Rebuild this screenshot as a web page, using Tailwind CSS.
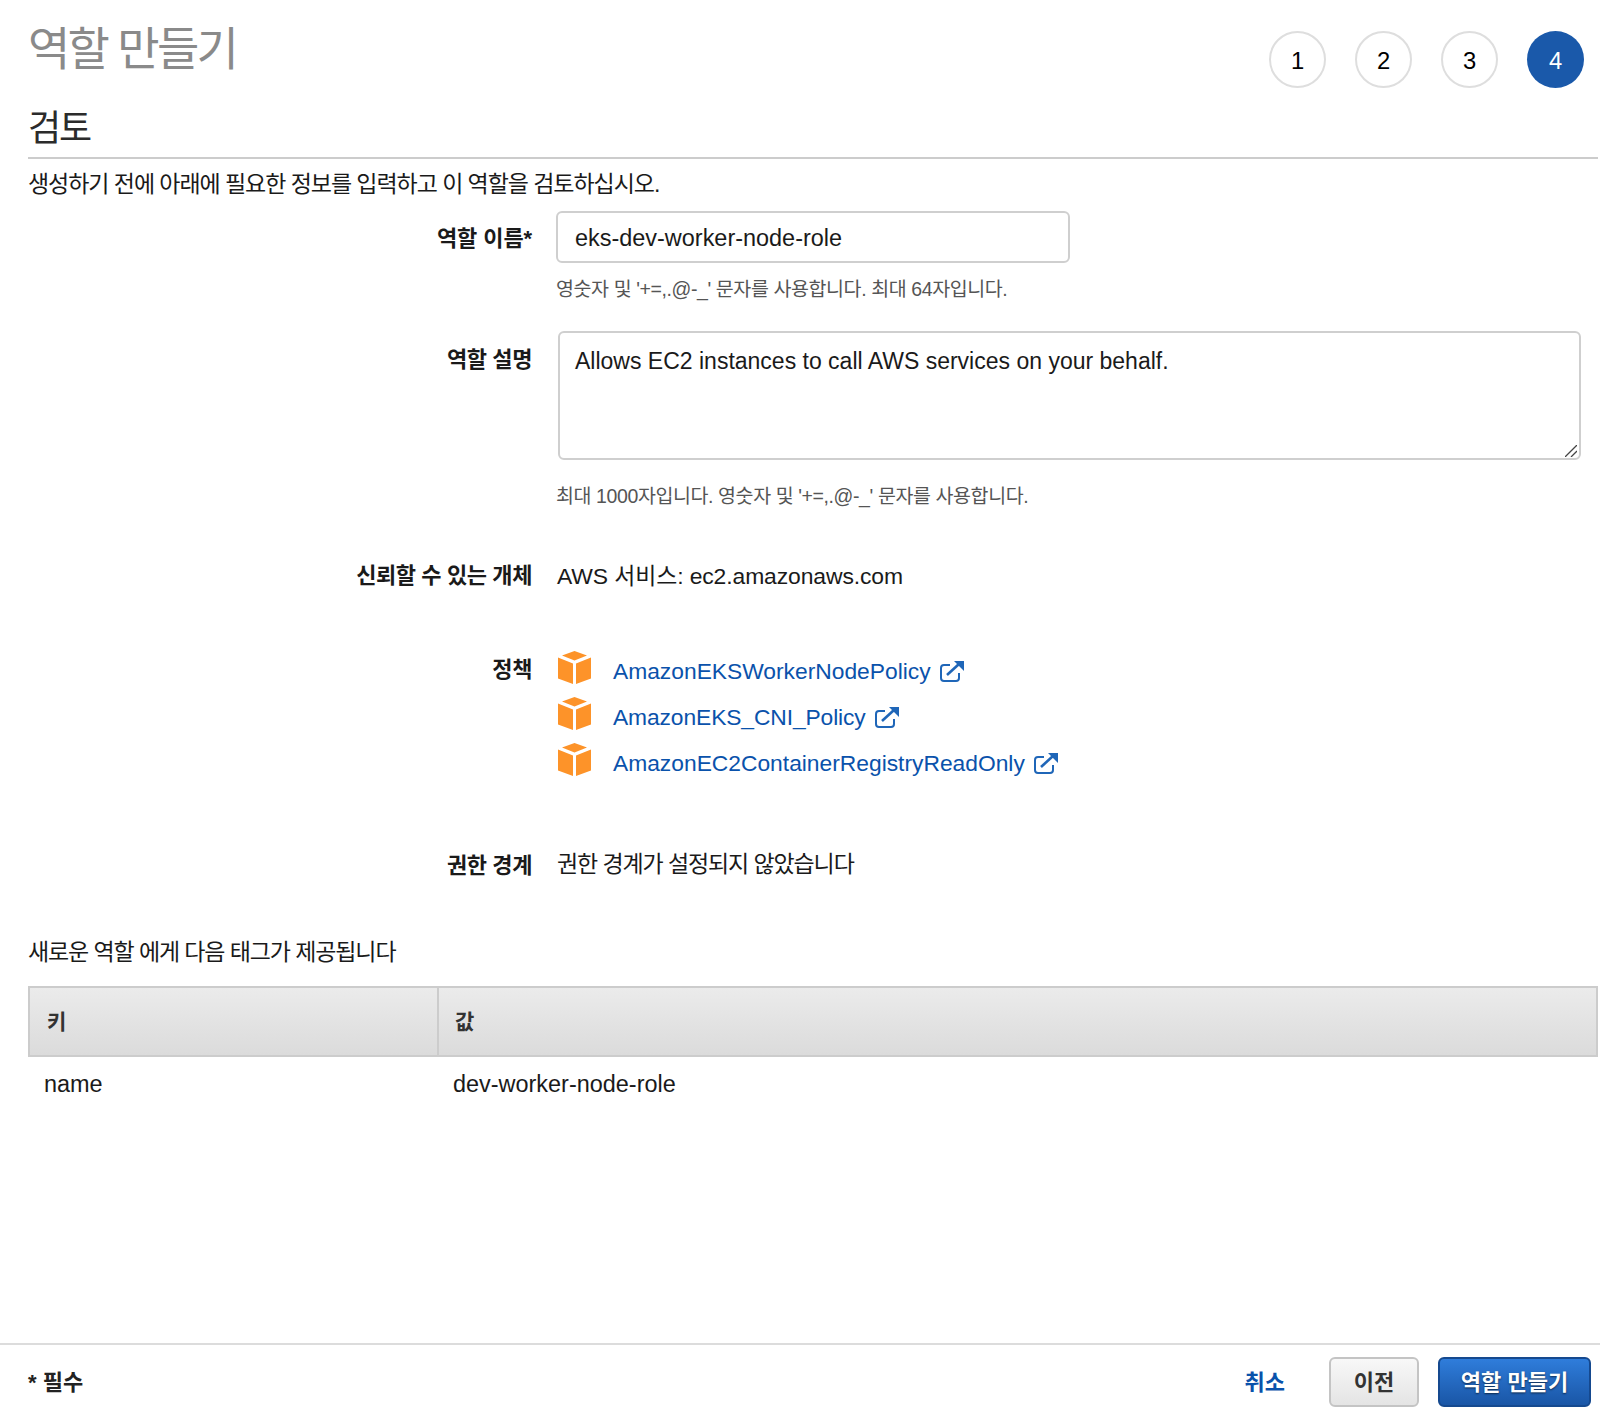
<!DOCTYPE html>
<html lang="ko">
<head>
  <meta charset="UTF-8">
  <title>역할 만들기</title>
  <script src="https://cdn.jsdelivr.net/npm/@tailwindcss/browser@4"></script>
</head>
<body class="bg-white text-[#1a1a1a] font-['Liberation_Sans','Noto_Sans_CJK_KR',sans-serif] text-[23px]">
  <div class="flex flex-col h-[1412px] w-[1600px] overflow-hidden">
    <main class="pl-[28px] pr-[2px]">
      <!-- Header -->
      <div class="flex justify-between items-start h-[97px]">
        <h1 class="text-[46px] leading-[54px] mt-[22px] text-[#8a8a8a] tracking-[-2.7px]">역할 만들기</h1>
        <ol class="flex gap-[29px] pt-[31px] pr-[14px] text-[23.8px]">
          <li class="w-[57px] h-[57px] rounded-full border-2 border-[#dedede] flex items-center justify-center text-black pt-[2px]">1</li>
          <li class="w-[57px] h-[57px] rounded-full border-2 border-[#dedede] flex items-center justify-center text-black pt-[2px]">2</li>
          <li class="w-[57px] h-[57px] rounded-full border-2 border-[#dedede] flex items-center justify-center text-black pt-[2px]">3</li>
          <li class="w-[57px] h-[57px] rounded-full bg-[#1a59aa] flex items-center justify-center text-white pt-[2px]">4</li>
        </ol>
      </div>

      <h2 class="text-[36px] leading-[64px] h-[62px] border-b-2 border-[#cccccc] text-[#2b2b2b] tracking-[-2px]">검토</h2>
      <p class="leading-[34px] mt-[8px] tracking-[-1.05px]">생성하기 전에 아래에 필요한 정보를 입력하고 이 역할을 검토하십시오.</p>

      <!-- Form -->
      <div class="grid grid-cols-[504px_1fr] gap-x-[24px] mt-[10px]">
        <label class="font-bold h-[52px] leading-[56px] text-right text-[22px] tracking-[-0.1px]">역할 이름*</label>
        <div>
          <input value="eks-dev-worker-node-role" class="block w-[514px] h-[52px] border-2 border-[#cfcfcf] rounded-[6px] pl-[17px] pr-[16px] pt-[2px] text-[23.45px] outline-none">
          <p class="text-[19.5px] leading-[26px] mt-[13px] text-[#555555] tracking-[-0.4px]">영숫자 및 '+=,.@-_' 문자를 사용합니다. 최대 64자입니다.</p>
        </div>

        <label class="font-bold text-right text-[22px] leading-[34px] mt-[41px] tracking-[-0.4px]">역할 설명</label>
        <div class="mt-[29px]">
          <div class="relative w-[1023px] h-[129px] ml-[2px]">
            <textarea class="block w-full h-full resize-none border-2 border-[#cfcfcf] rounded-[6px] px-[15px] py-[12px] leading-[32px] outline-none">Allows EC2 instances to call AWS services on your behalf.</textarea>
            <svg class="absolute right-[4px] bottom-[3px] w-[12px] h-[12px]" viewBox="0 0 12 12" stroke="#444444" stroke-width="1.3"><path d="M0 12 L12 0 M6 12 L12 6"/></svg>
          </div>
          <p class="text-[19.5px] leading-[26px] mt-[23px] text-[#555555] tracking-[-0.4px]">최대 1000자입니다. 영숫자 및 '+=,.@-_' 문자를 사용합니다.</p>
        </div>

        <label class="font-bold text-right text-[22px] leading-[34px] mt-[50px] tracking-[-0.4px]">신뢰할 수 있는 개체</label>
        <div class="leading-[34px] mt-[50px] pl-[1px] text-[22.9px] tracking-[-0.1px]">AWS 서비스: ec2.amazonaws.com</div>

        <label class="font-bold text-right text-[22px] leading-[34px] mt-[60px] tracking-[-0.4px]">정책</label>
        <div class="mt-[58px] flex flex-col gap-[13px]">
          <div class="flex items-center h-[33px]">
            <svg class="w-[33px] h-[33px] ml-[2px]" viewBox="0 0 33 33"><path fill="#fd9329" d="M16.5 0 L29 4.5 L16.5 9.5 L4 4.5 Z M0 6.5 L15 12.5 V33 L0 27.5 Z M33 6.5 L18 12.5 V33 L33 27.5 Z"/></svg>
            <a class="ml-[22px] mt-[8px] text-[22.8px] text-[#0a52ab] whitespace-nowrap" href="#">AmazonEKSWorkerNodePolicy</a>
            <svg class="w-[24px] h-[21px] ml-[9px] mt-[8px]" viewBox="0 0 24 21" fill="none" stroke="#1f66b8"><path stroke-width="2" d="M10 4 H4 Q1 4 1 7 V17 Q1 20 4 20 H16 Q19 20 19 17 V12"/><path stroke-width="2.6" d="M7 14 L19 3"/><path fill="#1f66b8" stroke="none" d="M14 0 H24 V10 Z"/></svg>
          </div>
          <div class="flex items-center h-[33px]">
            <svg class="w-[33px] h-[33px] ml-[2px]" viewBox="0 0 33 33"><path fill="#fd9329" d="M16.5 0 L29 4.5 L16.5 9.5 L4 4.5 Z M0 6.5 L15 12.5 V33 L0 27.5 Z M33 6.5 L18 12.5 V33 L33 27.5 Z"/></svg>
            <a class="ml-[22px] mt-[8px] text-[22.8px] text-[#0a52ab] whitespace-nowrap tracking-[-0.1px]" href="#">AmazonEKS_CNI_Policy</a>
            <svg class="w-[24px] h-[21px] ml-[9px] mt-[8px]" viewBox="0 0 24 21" fill="none" stroke="#1f66b8"><path stroke-width="2" d="M10 4 H4 Q1 4 1 7 V17 Q1 20 4 20 H16 Q19 20 19 17 V12"/><path stroke-width="2.6" d="M7 14 L19 3"/><path fill="#1f66b8" stroke="none" d="M14 0 H24 V10 Z"/></svg>
          </div>
          <div class="flex items-center h-[33px]">
            <svg class="w-[33px] h-[33px] ml-[2px]" viewBox="0 0 33 33"><path fill="#fd9329" d="M16.5 0 L29 4.5 L16.5 9.5 L4 4.5 Z M0 6.5 L15 12.5 V33 L0 27.5 Z M33 6.5 L18 12.5 V33 L33 27.5 Z"/></svg>
            <a class="ml-[22px] mt-[8px] text-[22.8px] text-[#0a52ab] whitespace-nowrap" href="#">AmazonEC2ContainerRegistryReadOnly</a>
            <svg class="w-[24px] h-[21px] ml-[9px] mt-[8px]" viewBox="0 0 24 21" fill="none" stroke="#1f66b8"><path stroke-width="2" d="M10 4 H4 Q1 4 1 7 V17 Q1 20 4 20 H16 Q19 20 19 17 V12"/><path stroke-width="2.6" d="M7 14 L19 3"/><path fill="#1f66b8" stroke="none" d="M14 0 H24 V10 Z"/></svg>
          </div>
        </div>

        <label class="font-bold text-right text-[22px] leading-[34px] mt-[73px] tracking-[-0.4px]">권한 경계</label>
        <div class="leading-[34px] mt-[71px] pl-[1px] tracking-[-1.1px]">권한 경계가 설정되지 않았습니다</div>
      </div>

      <!-- Tags -->
      <p class="leading-[34px] mt-[52px] tracking-[-1.1px]">새로운 역할 에게 다음 태그가 제공됩니다</p>
      <div class="mt-[17px]">
        <div class="grid grid-cols-[409px_1fr] h-[71px] border-2 border-[#cccccc] bg-gradient-to-b from-[#ebebeb] to-[#dbdbdb] font-bold text-[21px] text-[#333333]">
          <div class="flex items-center pl-[17px] border-r-2 border-[#cccccc]">키</div>
          <div class="flex items-center pl-[16px]">값</div>
        </div>
        <div class="grid grid-cols-[410px_1fr] leading-[34px] pt-[10px] text-[23.45px]">
          <div class="pl-[16px]">name</div>
          <div class="pl-[15px]">dev-worker-node-role</div>
        </div>
      </div>
    </main>

    <!-- Footer -->
    <footer class="mt-auto h-[69px] border-t-2 border-[#dcdcdc] flex items-center pl-[28px] pr-[9px] pt-[7px]">
      <span class="font-bold text-[22px] text-[#222222]">* 필수</span>
      <a class="ml-auto font-bold text-[22px] text-[#0a52ab] mr-[44px]" href="#">취소</a>
      <button class="w-[90px] h-[50px] rounded-[6px] border-2 border-[#c4c4c4] bg-gradient-to-b from-[#f8f8f8] to-[#e4e4e4] font-bold text-[22px] text-[#333333]">이전</button>
      <button class="w-[153px] h-[50px] ml-[19px] rounded-[6px] border-2 border-[#15498f] bg-gradient-to-b from-[#2f7ddb] to-[#1a56a6] font-bold text-[22px] text-white [text-shadow:0_1px_2px_rgba(0,0,0,0.6)]">역할 만들기</button>
    </footer>
  </div>
</body>
</html>
